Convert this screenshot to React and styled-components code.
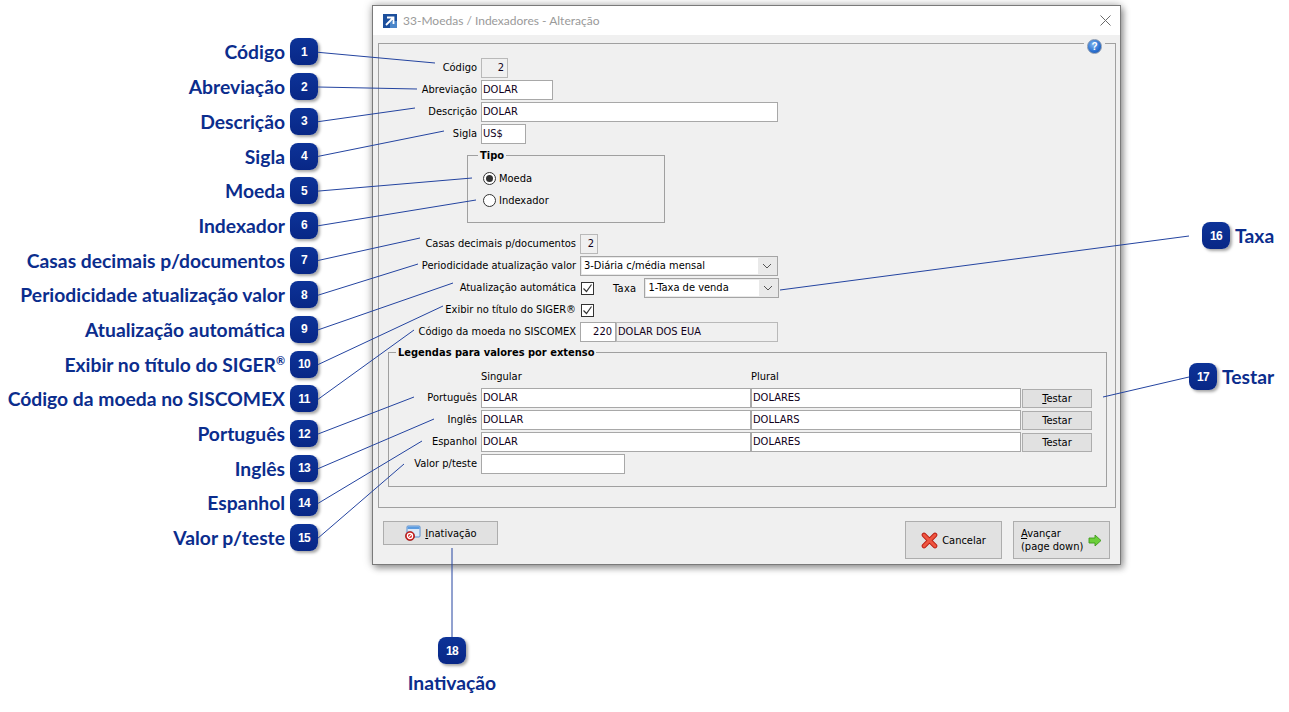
import React from 'react'
import styled, { createGlobalStyle } from 'styled-components'

const GlobalStyle = createGlobalStyle`
  html, body { margin: 0; padding: 0; background: #fff; }
  body { font-family: "Liberation Sans", Arial, sans-serif; }
  * { box-sizing: border-box; }
`

const NAVY = '#0b2d8d'
const UI_FONT = `"DejaVu Sans Condensed", "Liberation Sans", Arial, sans-serif`
const CALLOUT_FONT = `Lato, "Open Sans", "Liberation Sans", sans-serif`

const Stage = styled.div`
  position: relative;
  width: 1289px;
  height: 712px;
  overflow: hidden;
  display: flex;
  background: #fff;
`

const LeftRail = styled.div`
  width: 318px;
  flex-shrink: 0;
  padding-top: 34.65px;
  display: flex;
  flex-direction: column;
`

const Callout = styled.div`
  height: 34.7px;
  display: flex;
  align-items: center;
  justify-content: ${p => (p.$side === 'right' ? 'flex-start' : 'flex-end')};
  gap: 5px;
  flex-direction: ${p => (p.$side === 'right' ? 'row-reverse' : 'row')};
  margin-top: ${p => p.$offset || 0}px;
`

const CalloutText = styled.span`
  font-family: ${CALLOUT_FONT};
  font-weight: bold;
  font-size: 19.3px;
  color: ${NAVY};
  white-space: nowrap;
  sup { font-size: 11px; vertical-align: 7px; }
`

const Badge = styled.span`
  width: 28px;
  height: 27px;
  flex-shrink: 0;
  border-radius: 8px;
  background: linear-gradient(#0d3398, #082786);
  color: #fff;
  font-family: "Liberation Sans", Arial, sans-serif;
  font-weight: bold;
  font-size: 12px;
  letter-spacing: -0.6px;
  display: flex;
  align-items: center;
  justify-content: center;
  box-shadow: 2px 2px 3px rgba(0, 0, 0, 0.35);
`

const Middle = styled.div`
  margin-left: 54px;
  padding-top: 5px;
  display: flex;
  flex-direction: column;
`

const Window = styled.div`
  width: 749px;
  height: 560px;
  border: 1px solid #7a7a7a;
  background: #f0f0f0;
  display: flex;
  flex-direction: column;
  box-shadow: 0 0 8px rgba(0, 0, 0, 0.35), 3px 4px 6px rgba(0, 0, 0, 0.25);
  font-family: ${UI_FONT};
  font-size: 11px;
  color: #000;
`

const TitleBar = styled.div`
  height: 29px;
  background: #fff;
  display: flex;
  align-items: center;
  padding: 0 9px 0 10px;
`

const TitleText = styled.span`
  flex: 1;
  margin-left: 6px;
  font-family: Lato, "Noto Sans", sans-serif;
  font-size: 12px;
  color: #9a9a9a;
`

const Client = styled.div`
  flex: 1;
  display: flex;
  flex-direction: column;
  padding: 8px 4px 0 5px;
`

const Panel = styled.div`
  position: relative;
  height: 465px;
  border: 1px solid #a0a0a0;
  display: flex;
  flex-direction: column;
  align-items: flex-start;
`

const HelpButton = styled.span`
  position: absolute;
  top: -5px;
  right: 10px;
  padding: 0 3px;
  background: #f0f0f0;
  display: flex;
`

const HelpDot = styled.span`
  width: 15px;
  height: 15px;
  border-radius: 50%;
  background: radial-gradient(circle at 40% 35%, #7fb6f0, #2a6fcf 60%, #1a4fa6);
  border: 1px solid #8a9ab0;
  color: #fff;
  font: bold 10px "Liberation Sans", Arial, sans-serif;
  display: flex;
  align-items: center;
  justify-content: center;
`

const FormGrid = styled.div`
  display: grid;
  grid-template-columns: ${p => p.$label}px auto;
  column-gap: 4px;
  row-gap: 2px;
  margin-top: ${p => p.$top || 0}px;
  align-items: center;
`

const Label = styled.span`
  text-align: right;
  white-space: nowrap;
  line-height: 20px;
  padding-right: ${p => p.$gap || 0}px;
`

const Line = styled.div`
  display: flex;
  align-items: center;
  height: 20px;
`

const Box = styled.div`
  width: ${p => (p.$w ? `${p.$w}px` : 'auto')};
  height: 20px;
  border: 1px solid ${p => (p.$off ? '#b9b9b9' : '#a8a8a8')};
  background: ${p => (p.$off ? '#f0f0f0' : '#fff')};
  padding: 0 ${p => (p.$right ? 3 : 0)}px 0 1px;
  line-height: 18px;
  text-align: ${p => (p.$right ? 'right' : 'left')};
  white-space: nowrap;
  overflow: hidden;
  color: #10001a;
`

const Select = styled.div`
  width: ${p => p.$w}px;
  height: 20px;
  border: 1px solid #a5a5a5;
  background: #e9e9e9;
  padding: 1px;
  display: flex;
  align-items: center;
`

const SelectText = styled.span`
  flex: 1;
  height: 16px;
  background: #fff;
  line-height: 16px;
  padding-left: 2px;
  white-space: nowrap;
`

const Chevron = styled.span`
  width: 18px;
  display: flex;
  justify-content: center;
`

const Check = styled.span`
  width: 13px;
  height: 13px;
  margin-left: 1px;
  border: 1px solid #333;
  background: #fff;
  display: flex;
  align-items: center;
  justify-content: center;
`

const Group = styled.fieldset`
  margin: ${p => p.$top}px 0 0 ${p => p.$left}px;
  width: ${p => p.$w}px;
  height: ${p => p.$h}px;
  border: 1px solid #a0a0a0;
  padding: ${p => p.$pad}px 0 0 0;
  min-width: 0;
`

const Legend = styled.legend`
  margin-left: ${p => p.$shift}px;
  padding: 0 2px;
  font-weight: bold;
  line-height: 13px;
  font-size: 11px;
`

const RadioRow = styled.label`
  display: flex;
  align-items: center;
  height: 22px;
  padding-left: 15px;
  gap: 3px;
`

const RadioDot = styled.span`
  width: 13px;
  height: 13px;
  border-radius: 50%;
  border: 1px solid #333;
  background: #fff;
  display: flex;
  align-items: center;
  justify-content: center;
  &::after {
    content: '';
    width: 7px;
    height: 7px;
    border-radius: 50%;
    background: ${p => (p.$on ? '#333' : 'transparent')};
  }
`

const TaxaLabel = styled.span`
  margin: 0 8px 0 19px;
  letter-spacing: 0.3px;
`

const Legends = styled.div`
  display: grid;
  grid-template-columns: 92px 270px 270px 71px;
  row-gap: 2px;
  align-items: center;
`

const HeadCell = styled.span`
  line-height: 14px;
  margin-bottom: 2px;
`

const TestButton = styled.button`
  height: 19px;
  margin-left: 1px;
  border: 1px solid #adadad;
  background: #e1e1e1;
  font-family: ${UI_FONT};
  font-size: 11px;
  color: #000;
  padding: 0;
  u { text-decoration: underline; }
`

const Footer = styled.div`
  height: 56px;
  display: flex;
  align-items: flex-start;
  justify-content: space-between;
  padding: 13px 6px 0 5px;
`

const FootButton = styled.button`
  width: ${p => p.$w}px;
  height: ${p => p.$h}px;
  border: 1px solid #adadad;
  background: #e1e1e1;
  font-family: ${UI_FONT};
  font-size: 11px;
  color: #000;
  display: flex;
  align-items: center;
  justify-content: ${p => p.$justify || 'center'};
  gap: ${p => p.$gap || 4}px;
  padding: 0 ${p => p.$pad || 0}px;
  text-align: left;
  line-height: 13px;
  white-space: nowrap;
`

const RightGroup = styled.div`
  display: flex;
  gap: 11px;
`

const BottomCallout = styled.div`
  width: 160px;
  margin-top: 72px;
  display: flex;
  flex-direction: column;
  align-items: center;
  gap: 7px;
`

const RightRail = styled.div`
  margin-left: 68px;
  padding-top: 218.2px;
  display: flex;
  flex-direction: column;
`

const Leaders = styled.svg`
  position: absolute;
  inset: 0;
  pointer-events: none;
`

const leftCallouts = [
  'Código', 'Abreviação', 'Descrição', 'Sigla', 'Moeda', 'Indexador',
  'Casas decimais p/documentos', 'Periodicidade atualização valor',
  'Atualização automática', 'Exibir no título do SIGER', 'Código da moeda no SISCOMEX',
  'Português', 'Inglês', 'Espanhol', 'Valor p/teste',
]

const targets = [
  [435, 63], [417, 89], [415, 108], [444, 131], [472, 178], [476, 200],
  [420, 238], [418, 264], [453, 283], [443, 306], [414, 330],
  [414, 397], [434, 419], [422, 441], [404, 464],
]

const ChevronIcon = () => (
  <svg width="10" height="6" viewBox="0 0 10 6">
    <path d="M1 1l4 4 4-4" fill="none" stroke="#555" strokeWidth="1" />
  </svg>
)

const CheckMark = () => (
  <svg width="11" height="11" viewBox="0 0 11 11">
    <path d="M1.5 5.5l3 3 5-7" fill="none" stroke="#333" strokeWidth="1.2" />
  </svg>
)

const ComboBox = ({ w, children }) => (
  <Select $w={w}>
    <SelectText>{children}</SelectText>
    <Chevron><ChevronIcon /></Chevron>
  </Select>
)

const AppIcon = () => (
  <svg width="14" height="14" viewBox="0 0 14 14">
    <rect width="14" height="14" fill="#1c4f9c" />
    <rect x="7" y="7" width="7" height="7" fill="#4b86c9" />
    <path d="M3 11L10 4M4 3.5h6.5V10" fill="none" stroke="#fff" strokeWidth="1.8" />
  </svg>
)

const CloseIcon = () => (
  <svg width="11" height="11" viewBox="0 0 11 11">
    <path d="M0.5 0.5l10 10M10.5 0.5l-10 10" stroke="#6b6b6b" strokeWidth="1" />
  </svg>
)

const InactiveIcon = () => (
  <svg width="17" height="16" viewBox="0 0 17 16">
    <rect x="3" y="1" width="13" height="11" rx="1" fill="#dbe9f8" stroke="#5b8fd0" />
    <rect x="3.5" y="1.5" width="12" height="2.5" fill="#5b9be0" />
    <circle cx="6" cy="11" r="4.6" fill="#d42020" stroke="#8a0c0c" strokeWidth="0.6" />
    <circle cx="6" cy="11" r="2.6" fill="none" stroke="#fff" strokeWidth="1.2" />
    <path d="M4.2 12.8l3.6-3.6" stroke="#fff" strokeWidth="1.2" />
  </svg>
)

const CancelIcon = () => (
  <svg width="17" height="17" viewBox="0 0 17 17">
    <path d="M3 3l11 11M14 3L3 14" stroke="#b81c12" strokeWidth="4.6" strokeLinecap="round" />
    <path d="M3 3l11 11M14 3L3 14" stroke="#ee5540" strokeWidth="3" strokeLinecap="round" />
  </svg>
)

const NextIcon = () => (
  <svg width="14" height="13" viewBox="0 0 14 13">
    <path d="M1 4h6V1l6 5.5L7 12V9H1z" fill="#6ccf3a" stroke="#3f9a1c" strokeWidth="0.9" />
  </svg>
)

export default function App() {
  return (
    <>
      <GlobalStyle />
      <Stage>
        <LeftRail>
          {leftCallouts.map((t, i) => (
            <Callout key={t}>
              <CalloutText>
                {t}
                {i === 9 && <sup>®</sup>}
              </CalloutText>
              <Badge>{i + 1}</Badge>
            </Callout>
          ))}
        </LeftRail>

        <Middle>
          <Window>
            <TitleBar>
              <AppIcon />
              <TitleText>33-Moedas / Indexadores - Alteração</TitleText>
              <CloseIcon />
            </TitleBar>

            <Client>
              <Panel>
                <HelpButton><HelpDot>?</HelpDot></HelpButton>

                <FormGrid $label={98} $top={14}>
                  <Label>Código</Label>
                  <Box $w={27} $off $right>2</Box>
                  <Label>Abreviação</Label>
                  <Box $w={72}>DOLAR</Box>
                  <Label>Descrição</Label>
                  <Box $w={297}>DOLAR</Box>
                  <Label>Sigla</Label>
                  <Box $w={45}>US$</Box>
                </FormGrid>

                <Group $top={5} $left={88} $w={198} $h={74} $pad={5}>
                  <Legend $shift={10}>Tipo</Legend>
                  <RadioRow><RadioDot $on />Moeda</RadioRow>
                  <RadioRow><RadioDot />Indexador</RadioRow>
                </Group>

                <FormGrid $label={197} $top={11}>
                  <Label>Casas decimais p/documentos</Label>
                  <Box $w={18} $off $right>2</Box>
                  <Label>Periodicidade atualização valor</Label>
                  <ComboBox w={198}>3-Diária c/média mensal</ComboBox>
                  <Label>Atualização automática</Label>
                  <Line>
                    <Check><CheckMark /></Check>
                    <TaxaLabel>Taxa</TaxaLabel>
                    <ComboBox w={135}>1-Taxa de venda</ComboBox>
                  </Line>
                  <Label>Exibir no título do SIGER®</Label>
                  <Line>
                    <Check><CheckMark /></Check>
                  </Line>
                  <Label>Código da moeda no SISCOMEX</Label>
                  <Line>
                    <Box $w={36} $right>220</Box>
                    <Box $w={162} $off>DOLAR DOS EUA</Box>
                  </Line>
                </FormGrid>

                <Group $top={4} $left={9} $w={719} $h={141} $pad={11}>
                  <Legend $shift={7}>Legendas para valores por extenso</Legend>
                  <Legends>
                    <span />
                    <HeadCell>Singular</HeadCell>
                    <HeadCell>Plural</HeadCell>
                    <span />

                    <Label $gap={4}>Português</Label>
                    <Box>DOLAR</Box>
                    <Box>DOLARES</Box>
                    <TestButton><u>T</u>estar</TestButton>

                    <Label $gap={4}>Inglês</Label>
                    <Box>DOLLAR</Box>
                    <Box>DOLLARS</Box>
                    <TestButton>Testar</TestButton>

                    <Label $gap={4}>Espanhol</Label>
                    <Box>DOLAR</Box>
                    <Box>DOLARES</Box>
                    <TestButton>Testar</TestButton>

                    <Label $gap={4}>Valor p/teste</Label>
                    <Box $w={144} />
                  </Legends>
                </Group>
              </Panel>

              <Footer>
                <FootButton $w={115} $h={24}>
                  <InactiveIcon />
                  <span><u>I</u>nativação</span>
                </FootButton>
                <RightGroup>
                  <FootButton $w={97} $h={38}>
                    <CancelIcon />
                    <span>Cancelar</span>
                  </FootButton>
                  <FootButton $w={97} $h={38} $justify="space-between" $pad={7}>
                    <span><u>A</u>vançar<br />(page down)</span>
                    <NextIcon />
                  </FootButton>
                </RightGroup>
              </Footer>
            </Client>
          </Window>

          <BottomCallout>
            <Badge>18</Badge>
            <CalloutText>Inativação</CalloutText>
          </BottomCallout>
        </Middle>

        <RightRail>
          <Callout $side="right">
            <CalloutText>Taxa</CalloutText>
            <Badge>16</Badge>
          </Callout>
          <Callout $side="right" $offset={106.3}>
            <CalloutText>Testar</CalloutText>
            <Badge>17</Badge>
          </Callout>
        </RightRail>

        <Leaders width="1289" height="712">
          <g stroke="#2444a0" strokeWidth="1" fill="none">
            {targets.map(([x, y], i) => (
              <line key={i} x1="318" y1={52.3 + i * 34.7} x2={x} y2={y} />
            ))}
            <line x1="1189" y1="236" x2="780" y2="290" />
            <line x1="1189" y1="377" x2="1103" y2="397" />
            <line x1="452" y1="548" x2="452" y2="637" />
          </g>
        </Leaders>
      </Stage>
    </>
  )
}
